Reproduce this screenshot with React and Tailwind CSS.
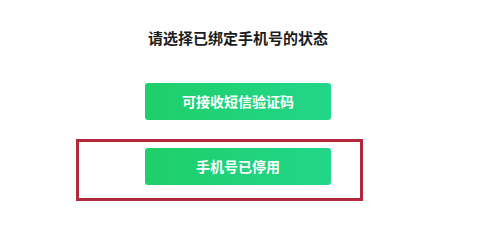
export default function App() {
  return (
    <div className="relative w-[487px] h-[231px] bg-white overflow-hidden" style={{ fontFamily: '"Noto Sans CJK SC", "Noto Sans", sans-serif' }}>
      <div className="w-[476px] flex flex-col items-center pt-[28px]">
        <div className="text-[15px] leading-[20px] font-bold text-[#1c1c1c] tracking-[0px]">请选择已绑定手机号的状态</div>
        <div className="mt-[35px] w-[186px] h-[37px] rounded-[3px] bg-gradient-to-r from-[#1fcf68] to-[#22d68a] flex items-center justify-center text-white text-[14px] font-bold">
          可接收短信验证码
        </div>
        <div className="mt-[28px] w-[186px] h-[37px] rounded-[3px] bg-gradient-to-r from-[#1fcf68] to-[#22d68a] flex items-center justify-center text-white text-[14px] font-bold">
          手机号已停用
        </div>
      </div>
      <div className="absolute left-[76px] top-[139px] w-[287px] h-[62px] border-[3px] border-[#b3283a]"></div>
    </div>
  );
}
